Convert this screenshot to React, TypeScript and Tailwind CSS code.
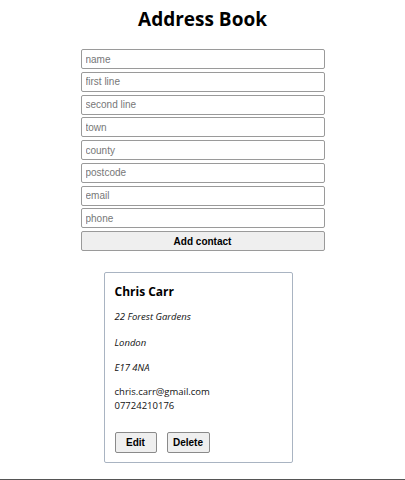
import React from 'react';

const fields: string[] = ["name", "first line", "second line", "town", "county", "postcode", "email", "phone"];

const App = () => {
    return (
        <div className="w-[405px] h-[480px] bg-white flex flex-col items-center border-b border-[#555]" style={{fontFamily: '"Open Sans", sans-serif'}}>
            <h1 className="mt-[7px] text-[19px] leading-[24px] font-bold text-black">Address Book</h1>
            <form className="mt-[18px] w-[244px] flex flex-col gap-[2.75px]">
                {fields.map((field: string) => (
                    <input
                        key={field}
                        type="text"
                        placeholder={field}
                        className="h-[20px] w-full border border-[#9a9a9a] rounded-[2px] px-[4px] text-[10px] text-[#333] placeholder:text-[#777] outline-none"
                        style={{fontFamily: '"Liberation Sans", Arial, sans-serif'}}
                    />
                ))}
                <button
                    type="button"
                    className="h-[20px] w-full border border-[#9a9a9a] rounded-[2px] bg-[#efefef] text-[10px] font-bold text-black"
                    style={{fontFamily: '"Liberation Sans", Arial, sans-serif'}}
                >
                    Add contact
                </button>
            </form>
            <div className="mt-[21px] mr-[9px] w-[189px] h-[191px] border border-[#a9b4c2] rounded-[2px] px-[10px] pt-[10px] flex flex-col text-[9.5px] text-[#111]">
                <h2 className="text-[12px] leading-[18px] font-bold text-black">Chris Carr</h2>
                <p className="mt-[9px] italic leading-[14px]">22 Forest Gardens</p>
                <p className="mt-[12px] italic leading-[14px]">London</p>
                <p className="mt-[11px] italic leading-[14px]">E17 4NA</p>
                <p className="mt-[10px] leading-[14px]">chris.carr@gmail.com</p>
                <p className="leading-[14px]">07724210176</p>
                <div className="mt-[19px] flex gap-[10px]">
                    <button type="button" className="w-[42px] h-[21px] border border-[#8a8a8a] rounded-[2px] bg-[#efefef] text-[10px] font-bold text-black" style={{fontFamily: '"Liberation Sans", Arial, sans-serif'}}>Edit</button>
                    <button type="button" className="w-[43px] h-[21px] border border-[#8a8a8a] rounded-[2px] bg-[#efefef] text-[10px] font-bold text-black" style={{fontFamily: '"Liberation Sans", Arial, sans-serif'}}>Delete</button>
                </div>
            </div>
        </div>
    );
};

export default App;
